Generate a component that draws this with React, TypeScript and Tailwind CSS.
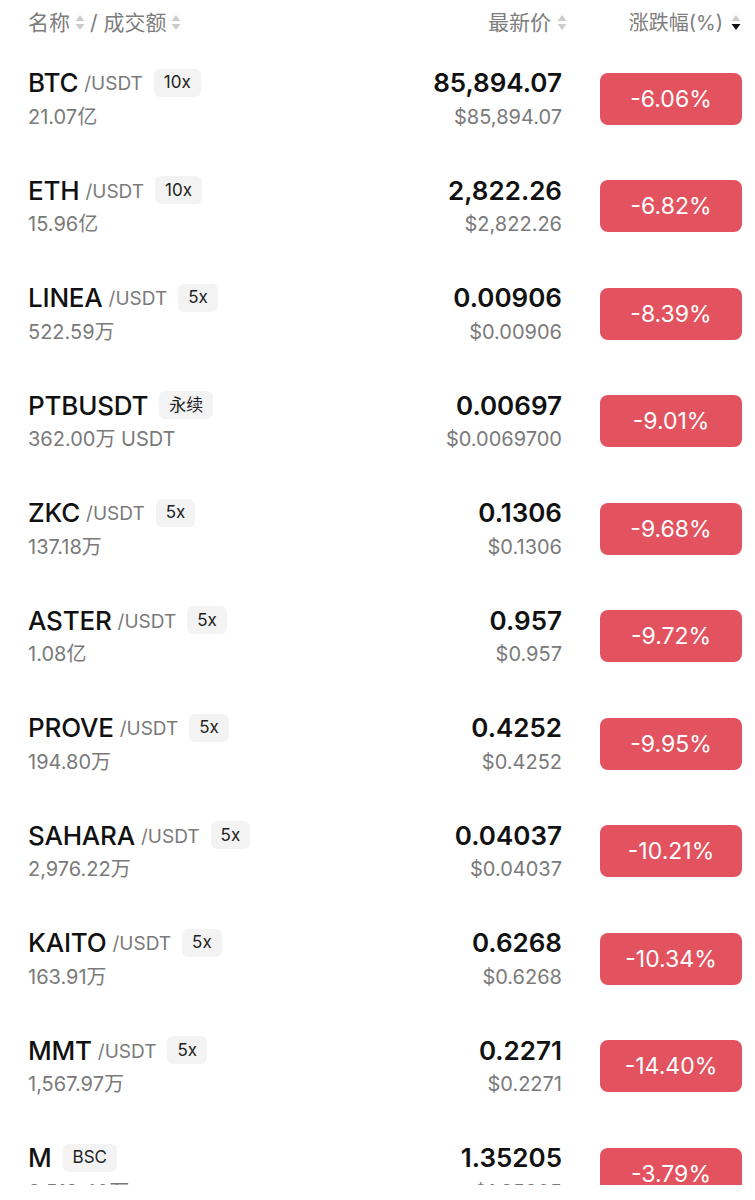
import React from "react";

type Row = {
  sym: string;
  quote?: string;
  tag: string;
  vol: string;
  price: string;
  usd: string;
  chg: string;
};

const rows: Row[] = [
  { sym: "BTC", quote: "/USDT", tag: "10x", vol: "21.07亿", price: "85,894.07", usd: "$85,894.07", chg: "-6.06%" },
  { sym: "ETH", quote: "/USDT", tag: "10x", vol: "15.96亿", price: "2,822.26", usd: "$2,822.26", chg: "-6.82%" },
  { sym: "LINEA", quote: "/USDT", tag: "5x", vol: "522.59万", price: "0.00906", usd: "$0.00906", chg: "-8.39%" },
  { sym: "PTBUSDT", tag: "永续", vol: "362.00万 USDT", price: "0.00697", usd: "$0.0069700", chg: "-9.01%" },
  { sym: "ZKC", quote: "/USDT", tag: "5x", vol: "137.18万", price: "0.1306", usd: "$0.1306", chg: "-9.68%" },
  { sym: "ASTER", quote: "/USDT", tag: "5x", vol: "1.08亿", price: "0.957", usd: "$0.957", chg: "-9.72%" },
  { sym: "PROVE", quote: "/USDT", tag: "5x", vol: "194.80万", price: "0.4252", usd: "$0.4252", chg: "-9.95%" },
  { sym: "SAHARA", quote: "/USDT", tag: "5x", vol: "2,976.22万", price: "0.04037", usd: "$0.04037", chg: "-10.21%" },
  { sym: "KAITO", quote: "/USDT", tag: "5x", vol: "163.91万", price: "0.6268", usd: "$0.6268", chg: "-10.34%" },
  { sym: "MMT", quote: "/USDT", tag: "5x", vol: "1,567.97万", price: "0.2271", usd: "$0.2271", chg: "-14.40%" },
  { sym: "M", tag: "BSC", vol: "3,512.40万", price: "1.35205", usd: "$1.35205", chg: "-3.79%" },
];

const font = { fontFamily: 'Inter, "Noto Sans CJK SC", sans-serif' };

function SortIcon({ active }: { active?: boolean }) {
  return (
    <svg width="10" height="17" viewBox="0 0 10 17" className="shrink-0">
      <path d="M5 1 L9.5 7 L0.5 7 Z" fill="#cccccc" />
      <path d="M5 16 L9.5 10 L0.5 10 Z" fill={active ? "#111111" : "#cccccc"} />
    </svg>
  );
}

export default function App() {
  return (
    <div className="w-[755px] h-[1185px] overflow-hidden bg-white" style={font}>
      <div className="h-[45px] flex items-center pl-[28px] pr-[13px] text-[21px] text-[#7d7d7d]">
        <div className="flex-1 flex items-center">
          <span>名称</span>
          <span className="ml-[5px]"><SortIcon /></span>
          <span className="ml-[5px]">/ 成交额</span>
          <span className="ml-[5px]"><SortIcon /></span>
        </div>
        <div className="flex items-center">
          <span>最新价</span>
          <span className="ml-[6px]"><SortIcon /></span>
        </div>
        <div className="w-[175px] flex items-center justify-end">
          <span className="text-[20px]">涨跌幅(%)</span>
          <span className="ml-[8px] mr-[1px]"><SortIcon active /></span>
        </div>
      </div>
      {rows.map((r) => (
        <div key={r.sym} className="h-[107.5px] flex items-center pl-[28px] pr-[13px]">
          <div className="flex-1 flex flex-col gap-[6px]">
            <div className="flex items-center h-[30px]">
              <span className="text-[26px] font-medium text-[#111111] tracking-[-0.2px]">{r.sym}</span>
              {r.quote && <span className="ml-[6px] mt-[3px] text-[19px] text-[#7a7a7a]">{r.quote}</span>}
              <span className="ml-[11px] h-[28px] px-[10px] rounded-[6px] bg-[#f3f3f3] text-[17px] text-[#222222] flex items-center">{r.tag}</span>
            </div>
            <div className="h-[26px] flex items-center text-[20px] text-[#7a7a7a]">{r.vol}</div>
          </div>
          <div className="flex flex-col items-end gap-[6px]">
            <div className="h-[30px] flex items-center text-[26px] font-semibold text-[#111111]">{r.price}</div>
            <div className="h-[26px] flex items-center text-[20px] text-[#7a7a7a]">{r.usd}</div>
          </div>
          <div className="w-[180px] flex justify-end">
            <div className="w-[142px] h-[52px] rounded-[8px] bg-[#e2535f] text-white text-[23px] flex items-center justify-center">
              {r.chg}
            </div>
          </div>
        </div>
      ))}
    </div>
  );
}
